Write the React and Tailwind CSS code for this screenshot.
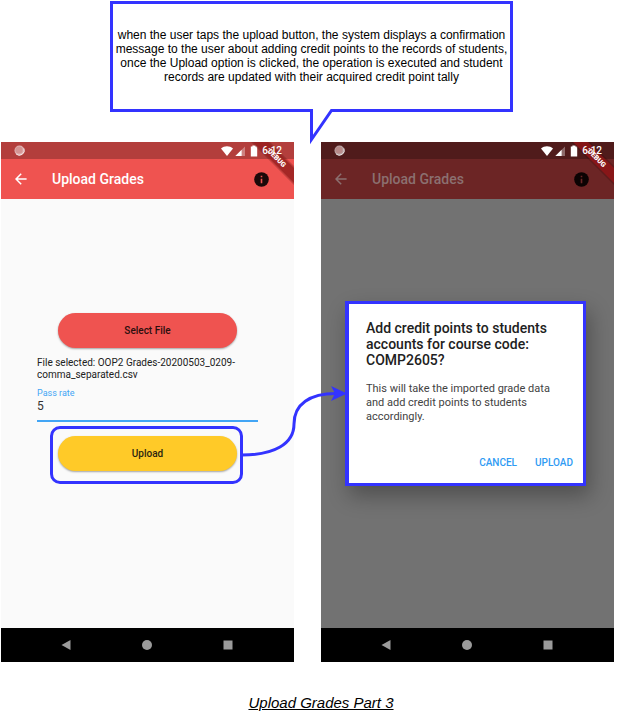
const themes = {
  light: {
    status: "bg-[#b33e3c]",
    bar: "bg-[#ef5350]",
    title: "text-white",
    info: "text-[#1b0909]",
    mark: "#ef5350",
    body: "bg-[#fafafa]",
    ribbon: "#9c2020",
    shade: "#5c1414",
  },
  dimmed: {
    status: "bg-[#501b1b]",
    bar: "bg-[#6c2525]",
    title: "text-[#8b7070]",
    info: "text-[#0c0303]",
    mark: "#6c2525",
    body: "bg-[#727272]",
    ribbon: "#931518",
    shade: "#3a0a0a",
  },
};

function StatusBar({ theme }) {
  return (
    <div className={`flex h-[17px] items-center pl-[13px] pr-3 ${theme.status}`}>
      <svg className="h-[11px] w-[11px]" viewBox="0 0 11 11" aria-hidden="true">
        <circle cx="5.5" cy="5.5" r="5" fill="#fff" fillOpacity="0.6" />
        <circle cx="5" cy="5" r="3.6" fill="#b33e3c" fillOpacity="0.25" />
        <path d="M2 9A5 5 0 0 0 10 3.5" fill="none" stroke="#fff" strokeOpacity="0.7" />
      </svg>
      <svg className="ml-auto h-3 w-[38px]" viewBox="0 0 38 12" aria-hidden="true">
        <path d="M0 3.4C3.4 .6 8.6 .6 12 3.4L6 11Z" fill="#fff" />
        <path d="M24 1.4V11H14.4Z" fill="#fff" fillOpacity="0.35" />
        <path d="M20.6 4.8V11H14.4Z" fill="#fff" />
        <path d="M31.4 .5H34.6V1.6H36.2V11.4H29.8V1.6H31.4Z" fill="#fff" />
      </svg>
      <span className="relative z-10 ml-[3px] text-[10px] font-medium leading-3 text-white">6:12</span>
    </div>
  );
}

function DebugRibbon({ theme }) {
  return (
    <svg className="absolute right-0 top-0 h-11 w-11" viewBox="0 0 44 44">
      <path d="M1 0H20L44 24V43Z" fill={theme.shade} fillOpacity="0.3" />
      <path d="M3 0H18L44 26V41Z" fill={theme.ribbon} fillOpacity="0.8" />
      <text
        x="27"
        y="18.5"
        transform="rotate(45 27 16)"
        textAnchor="middle"
        fontSize="7"
        fontWeight="900"
        fill="#fff"
      >
        DEBUG
      </text>
    </svg>
  );
}

function Phone({ theme, children }) {
  return (
    <section className="relative flex h-[520px] flex-col font-[Roboto,sans-serif]">
      <StatusBar theme={theme} />
      <header className={`flex h-10 items-center pl-3.5 pr-[25px] ${theme.bar} ${theme.title}`}>
        <button type="button" aria-label="Back">
          <svg className="h-3 w-3" viewBox="0 0 12 12" aria-hidden="true">
            <path d="M11.6 6H1.2M6.2 .8L1 6L6.2 11.2" fill="none" stroke="currentColor" strokeWidth="1.5" />
          </svg>
        </button>
        <h2 className="ml-[25px] text-[14px] font-medium leading-5">Upload Grades</h2>
        <button type="button" aria-label="Information" className={`ml-auto ${theme.info}`}>
          <svg className="h-[15px] w-[15px]" viewBox="0 0 15 15" aria-hidden="true">
            <circle cx="7.5" cy="7.5" r="7.3" fill="currentColor" />
            <path d="M6.7 3.7H8.3V5.3H6.7ZM6.7 6.7H8.3V11.2H6.7Z" fill={theme.mark} />
          </svg>
        </button>
      </header>
      <div className={`flex flex-1 flex-col ${theme.body}`}>{children}</div>
      <nav className="flex h-[34px] items-center justify-between bg-black pl-[60px] pr-[61px] text-[#9b9b9b]">
        <button type="button" aria-label="Go back">
          <svg className="h-2.5 w-2.5" viewBox="0 0 10 10" aria-hidden="true">
            <path d="M9.5 0V10L.5 5Z" fill="currentColor" />
          </svg>
        </button>
        <button type="button" aria-label="Home">
          <svg className="h-2.5 w-2.5" viewBox="0 0 10 10" aria-hidden="true">
            <circle cx="5" cy="5" r="5" fill="currentColor" />
          </svg>
        </button>
        <button type="button" aria-label="Recent apps">
          <svg className="h-2.5 w-2.5" viewBox="0 0 10 10" aria-hidden="true">
            <rect x=".5" y=".5" width="9" height="9" fill="currentColor" />
          </svg>
        </button>
      </nav>
      <DebugRibbon theme={theme} />
    </section>
  );
}

function Callout() {
  return (
    <div className="relative ml-[110px] mr-[130px] mt-px flex h-[111px] items-center border-[3px] border-[#3333ff] bg-white pb-0.5">
      <p className="w-full text-center text-[12px] leading-[14px]">
        when the user taps the upload button, the system displays a confirmation message to the user
        about adding credit points to the records of students, once the Upload option is clicked, the
        operation is executed and student records are updated with their acquired credit point tally
      </p>
      <svg className="absolute left-1/2 top-full -ml-[2px] h-9 w-6" viewBox="0 0 24 36" overflow="visible" aria-hidden="true">
        <path d="M3 -1H21V3L3 29Z" fill="#fff" />
        <path d="M0 1.5H1.5V30.5L21.5 1.5H24" fill="none" stroke="#3333ff" strokeWidth="3" strokeMiterlimit="10" />
      </svg>
    </div>
  );
}

function FlowArrow() {
  return (
    <svg className="absolute -top-[45px] left-full z-10 h-20 w-[108px]" viewBox="0 0 108 80" aria-hidden="true">
      <path d="M2 71C34 71 54 60 54 40C54 20 70 9.5 96 9.5" fill="none" stroke="#3333ff" strokeWidth="3" />
      <path d="M107 9.5L91 2L95 9.5L91 17Z" fill="#3333ff" />
    </svg>
  );
}

function UploadForm() {
  return (
    <form className="flex flex-col px-9 pt-[114px]" onSubmit={(e) => e.preventDefault()}>
      <button
        type="button"
        className="mx-[21px] h-[35px] rounded-full bg-[#ef5350] text-[10px] font-medium text-[#2b0f0e] shadow-[0_1px_2px_rgba(0,0,0,0.35)]"
      >
        Select File
      </button>
      <p className="mt-[9px] text-[10px] leading-3 text-[#212121]">
        File selected: OOP2 Grades-20200503_0209-comma_separated.csv
      </p>
      <label htmlFor="pass-rate" className="mt-[7px] text-[9px] leading-[10px] text-[#42a5f5]">
        Pass rate
      </label>
      <input
        id="pass-rate"
        defaultValue="5"
        className="h-6 w-full border-b-2 border-[#42a5f5] bg-transparent pb-1.5 text-[12px] leading-4 text-[#333] outline-none"
      />
      <div className="relative ml-[13px] mr-[15px] mt-1 flex rounded-[10px] border-[3px] border-[#3333ff] pb-2.5 pl-[5px] pr-[3px] pt-[7px]">
        <button
          type="submit"
          className="h-[35px] flex-1 rounded-full bg-[#ffca28] text-[10px] font-medium text-[#2c2410] shadow-[0_1px_2px_rgba(0,0,0,0.35)]"
        >
          Upload
        </button>
        <FlowArrow />
      </div>
    </form>
  );
}

function ConfirmDialog() {
  return (
    <div
      role="dialog"
      aria-labelledby="confirm-title"
      className="ml-6 mr-7 mt-[102px] flex h-[185px] flex-col border-[3px] border-l-4 border-[#3333ff] bg-white pl-[17px] pr-2.5 pt-4 shadow-[4px_10px_20px_rgba(0,0,0,0.3)]"
    >
      <h3 id="confirm-title" className="text-[14px] font-medium leading-4 text-[#212121]">
        Add credit points to students accounts for course code: COMP2605?
      </h3>
      <p className="mt-[14px] pr-2.5 text-[11px] leading-[14px] text-[#424242]">
        This will take the imported grade data and add credit points to students accordingly.
      </p>
      <div className="mb-3.5 mt-auto flex justify-end gap-[18px] text-[10px] font-medium leading-3 text-[#2f9bf3]">
        <button type="button">CANCEL</button>
        <button type="button">UPLOAD</button>
      </div>
    </div>
  );
}

export default function App() {
  return (
    <main className="flex flex-col overflow-hidden bg-white font-['Liberation_Sans',Arial,sans-serif] text-black">
      <Callout />
      <div className="mt-[30px] grid grid-cols-2 gap-[27px] pl-px pr-[29px]">
        <Phone theme={themes.light}>
          <UploadForm />
        </Phone>
        <Phone theme={themes.dimmed}>
          <ConfirmDialog />
        </Phone>
      </div>
      <h1 className="mb-0.5 mt-8 pr-px text-center text-[15px] italic leading-[18px] underline">
        Upload Grades Part 3
      </h1>
    </main>
  );
}
